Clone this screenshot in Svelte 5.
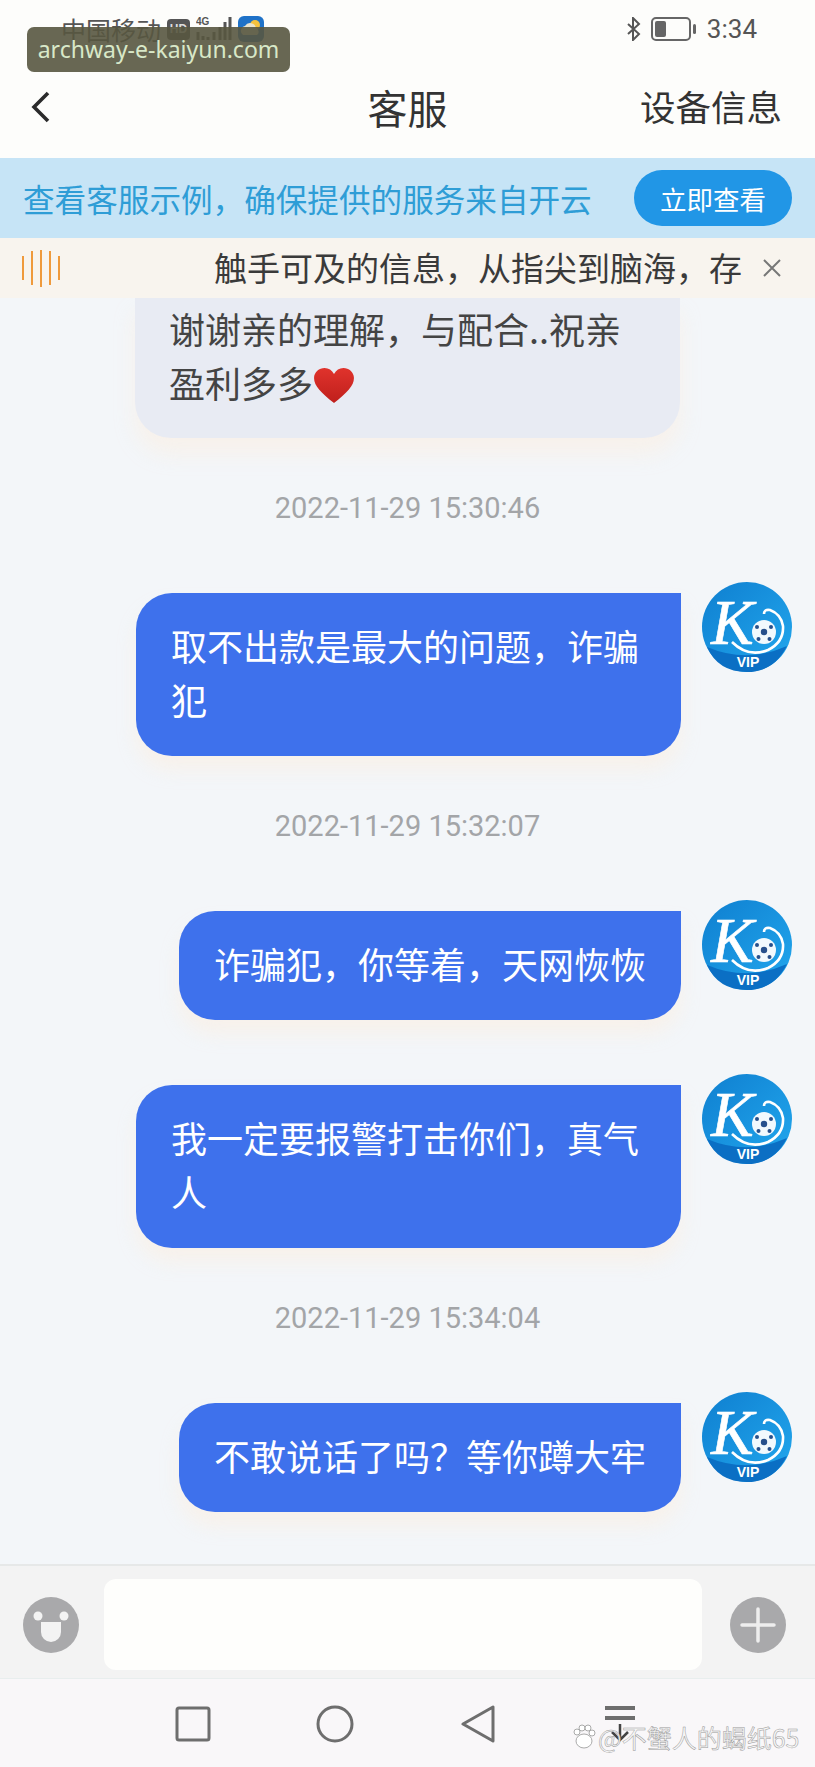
<script>
  const feed = [
    { type: 'time', text: '2022-11-29 15:30:46' },
    { type: 'msg', text: '取不出款是最大的问题，诈骗犯' },
    { type: 'time', text: '2022-11-29 15:32:07' },
    { type: 'msg', text: '诈骗犯，你等着，天网恢恢' },
    { type: 'msg', text: '我一定要报警打击你们，真气人' },
    { type: 'time', text: '2022-11-29 15:34:04' },
    { type: 'msg', text: '不敢说话了吗？等你蹲大牢' }
  ];
  const bars = [24, 34, 37, 34, 24];
</script>

{#snippet avatar()}
  <svg class="avatar" viewBox="0 0 90 90">
    <defs>
      <linearGradient id="ko" x1="0" y1="0" x2="1" y2="1">
        <stop offset="0" stop-color="#0f7fd0" />
        <stop offset="1" stop-color="#22a8ee" />
      </linearGradient>
    </defs>
    <circle cx="45" cy="45" r="45" fill="url(#ko)" />
    <path d="M5 65 Q45 82 85 64 Q72 90 45 90 Q16 90 5 65Z" fill="#0b6fc4" />
    <text x="9" y="62" class="logo-k">K</text>
    <path d="M30 60 Q46 76 66 68 Q82 60 81 44 Q79 32 68 28 Q62 27 62 32" fill="none" stroke="#fff" stroke-width="2.6" />
    <circle cx="62" cy="50" r="12" fill="#f2f9fd" />
    <circle cx="62" cy="50" r="3.2" fill="#27508c" />
    <circle cx="55" cy="45" r="2" fill="#27508c" />
    <circle cx="69" cy="45" r="2" fill="#27508c" />
    <circle cx="56.500" cy="57" r="2" fill="#27508c" />
    <circle cx="67.500" cy="57" r="2" fill="#27508c" />
    <text x="46" y="85" text-anchor="middle" class="logo-vip">VIP</text>
  </svg>
{/snippet}

<div class="app">
  <div class="stamp">archway-e-kaiyun.com</div>

  <div class="status">
    <div class="status-left">
      <span class="carrier">中国移动</span>
      <span class="hd">HD</span>
      <svg class="signal" width="36" height="26" viewBox="0 0 36 26">
        <text x="0" y="9" class="tiny">4G</text>
        <path d="M2 16v8M7 20v4M12 21v3M18 16v8M24 11v13M29 6v18M34 1v23" stroke="#555" stroke-width="3" />
      </svg>
      <svg width="26" height="26" viewBox="0 0 26 26">
        <rect width="26" height="26" rx="6" fill="#1f72c8" />
        <circle cx="17" cy="9" r="5" fill="#f5c23e" />
        <path d="M5 19a5 5 0 0 1 2-9 6 6 0 0 1 11 2 4 4 0 0 1 1 7Z" fill="#e9e3cf" />
      </svg>
    </div>
    <div class="status-right">
      <svg width="15" height="24" viewBox="0 0 15 24" fill="none" stroke="#555" stroke-width="2">
        <path d="M2 7l11 10-6 6V1l6 6L2 17" />
      </svg>
      <svg width="46" height="24" viewBox="0 0 46 24">
        <rect x="1" y="1" width="38" height="22" rx="4" fill="none" stroke="#666" stroke-width="2" />
        <rect x="4" y="4" width="11" height="16" rx="2" fill="#666" />
        <rect x="42" y="7" width="3" height="10" rx="1.5" fill="#666" />
      </svg>
      <span class="clock">3:34</span>
    </div>
  </div>

  <header class="top">
    <svg class="back" width="20" height="32" viewBox="0 0 20 32" fill="none" stroke="#2b2b2b" stroke-width="3.6">
      <path d="M17 2L3 16l14 14" />
    </svg>
    <h1>客服</h1>
    <span class="device">设备信息</span>
  </header>

  <div class="banner">
    <span>查看客服示例，确保提供的服务来自开云</span>
    <button>立即查看</button>
  </div>

  <div class="notice">
    <div class="wave">
      {#each bars as h}
        <i style="height: {h}px"></i>
      {/each}
    </div>
    <div class="notice-text">触手可及的信息，从指尖到脑海，存</div>
    <svg width="20" height="20" viewBox="0 0 20 20" stroke="#777" stroke-width="2">
      <path d="M2 2l16 16M18 2L2 18" />
    </svg>
  </div>

  <main class="chat">
    <div class="incoming">
      谢谢亲的理解，与配合..祝亲<br />盈利多多<svg class="heart" width="42" height="40" viewBox="0 0 40 40" preserveAspectRatio="none">
        <defs>
          <linearGradient id="heart" x1="0" y1="0" x2="0" y2="1">
            <stop offset="0" stop-color="#e0332c" />
            <stop offset="1" stop-color="#bf1f1c" />
          </linearGradient>
        </defs>
        <path d="M20 37C8 27 1 20 1 12 1 6 6 2 11 2c4 0 7 2 9 6 2-4 5-6 9-6 5 0 10 4 10 10 0 8-7 15-19 25Z" fill="url(#heart)" />
      </svg>
    </div>
    {#each feed as item}
      {#if item.type === 'time'}
        <div class="time">{item.text}</div>
      {:else}
        <div class="row">
          <div class="bubble">{item.text}</div>
          {@render avatar()}
        </div>
      {/if}
    {/each}
  </main>

  <div class="inputbar">
    <svg width="56" height="56" viewBox="0 0 56 56">
      <circle cx="28" cy="28" r="28" fill="#a9a9ab" />
      <circle cx="15" cy="19" r="4.5" fill="#f3f3f3" />
      <circle cx="41" cy="19" r="4.5" fill="#f3f3f3" />
      <path d="M18 25h20v10a10 10 0 0 1-20 0Z" fill="#f3f3f3" />
    </svg>
    <div class="field"></div>
    <svg width="56" height="56" viewBox="0 0 56 56">
      <circle cx="28" cy="28" r="28" fill="#a9a9ab" />
      <path d="M28 12v32M12 28h32" stroke="#eee" stroke-width="3.5" stroke-linecap="round" />
    </svg>
  </div>

  <nav class="navbar">
    <svg width="36" height="36" viewBox="0 0 36 36" fill="none" stroke="#6e6e6e" stroke-width="3">
      <rect x="2" y="2" width="32" height="32" rx="2" />
    </svg>
    <svg width="38" height="38" viewBox="0 0 38 38" fill="none" stroke="#6e6e6e" stroke-width="3">
      <circle cx="19" cy="19" r="17" />
    </svg>
    <svg width="36" height="38" viewBox="0 0 36 38" fill="none" stroke="#6e6e6e" stroke-width="3" stroke-linejoin="round">
      <path d="M33 2v34L3 19Z" />
    </svg>
    <svg width="32" height="38" viewBox="0 0 32 38" fill="none" stroke="#6e6e6e" stroke-width="4">
      <path d="M1 3h30M1 13h30" />
      <path d="M16 19v16M8 27l8 8 8-8" stroke="#444" stroke-width="2.5" />
    </svg>
    <div class="mark">
      <svg width="24" height="26" viewBox="0 0 24 26" fill="#fff" stroke="#aaa" stroke-width="1">
        <ellipse cx="12" cy="17" rx="8" ry="7" />
        <circle cx="5" cy="8" r="3" />
        <circle cx="10" cy="4" r="3" />
        <circle cx="16" cy="4" r="3" />
        <circle cx="20" cy="9" r="3" />
      </svg>
      <span>@不蟹人的蝎纸65</span>
    </div>
  </nav>
</div>

<style>
  :global(body) {
    margin: 0;
  }
  .app {
    position: relative;
    width: 815px;
    height: 1767px;
    display: flex;
    flex-direction: column;
    overflow: hidden;
    font-family: "Noto Sans CJK SC", "Noto Sans", sans-serif;
    background: #fdfdfb;
    color: #333;
  }
  .stamp {
    position: absolute;
    left: 27px;
    top: 27px;
    width: 263px;
    height: 45px;
    box-sizing: border-box;
    border-radius: 7px;
    background: rgba(88, 86, 64, 0.9);
    color: #d8e8c8;
    font-family: "Noto Sans", sans-serif;
    font-size: 23px;
    line-height: 45px;
    text-align: center;
    white-space: nowrap;
  }
  .status {
    height: 56px;
    flex: none;
    display: flex;
    justify-content: space-between;
    align-items: flex-start;
    padding: 16px 58px 0 61px;
    box-sizing: border-box;
    color: #555;
  }
  .status-left, .status-right {
    display: flex;
    align-items: center;
    height: 26px;
  }
  .status-left {
    gap: 6px;
  }
  .status-right {
    gap: 10px;
  }
  .carrier {
    font-size: 25px;
    line-height: 26px;
  }
  .hd {
    width: 23px;
    height: 21px;
    border-radius: 4px;
    background: #555;
    color: #ddd;
    font-family: "Liberation Sans", sans-serif;
    font-size: 12px;
    font-weight: 700;
    line-height: 21px;
    text-align: center;
  }
  .tiny {
    font-family: "Liberation Sans", sans-serif;
    font-size: 10px;
    font-weight: 700;
    fill: #555;
  }
  .clock {
    font-family: "Roboto", sans-serif;
    font-size: 26px;
    line-height: 26px;
  }
  .top {
    height: 102px;
    flex: none;
    position: relative;
    display: flex;
    align-items: center;
    justify-content: space-between;
    padding: 0 33px 2px 31px;
    box-sizing: border-box;
  }
  .back {
    margin-top: 2px;
  }
  .top h1 {
    position: absolute;
    left: 0;
    right: 0;
    top: 21px;
    margin: 0;
    text-align: center;
    font-size: 40px;
    font-weight: 400;
    line-height: 60px;
    color: #333;
  }
  .device {
    font-size: 35.5px;
    line-height: 50px;
    color: #333;
  }
  .banner {
    height: 80px;
    flex: none;
    display: flex;
    align-items: center;
    justify-content: space-between;
    padding: 0 23px;
    background: #c6e4f6;
    color: #2e9dd6;
    font-size: 31.6px;
    white-space: nowrap;
  }
  .banner button {
    width: 158px;
    height: 56px;
    padding: 0;
    border: none;
    border-radius: 28px;
    background: #2196e6;
    color: #fff;
    font-family: inherit;
    font-size: 26.5px;
  }
  .notice {
    height: 60px;
    flex: none;
    display: flex;
    align-items: center;
    padding: 0 33px 0 22px;
    background: #f8f4ee;
  }
  .wave {
    display: flex;
    align-items: center;
    gap: 7px;
    width: 39px;
  }
  .wave i {
    width: 2px;
    background: #ef9a3c;
  }
  .notice-text {
    flex: 1;
    margin-left: 153px;
    padding-bottom: 2px;
    font-size: 33px;
    color: #3a3a3a;
    white-space: nowrap;
  }
  .chat {
    flex: 1;
    min-height: 0;
    padding: 0 23px 0 0;
    background: #f3f6f9;
    overflow: hidden;
  }
  .incoming {
    width: 545px;
    margin-left: 135px;
    box-sizing: border-box;
    padding: 3px 33px 29px 34px;
    border-radius: 0 0 36px 36px;
    background: #e8ebf3;
    box-shadow: 0 16px 20px rgba(250, 240, 230, 0.7);
    font-size: 36px;
    line-height: 54px;
    color: #444;
  }
  .heart {
    vertical-align: -8px;
  }
  .time {
    height: 40px;
    margin-top: 50px;
    margin-right: -23px;
    text-align: center;
    font-family: "Roboto", sans-serif;
    font-size: 29px;
    line-height: 40px;
    color: #a3a5a8;
  }
  .row {
    display: flex;
    justify-content: flex-end;
    align-items: flex-start;
    gap: 21px;
    margin-top: 65px;
  }
  .bubble {
    max-width: 475px;
    padding: 25px 35px 30px;
    border-radius: 36px 0 36px 36px;
    background: #3e71ec;
    box-shadow: 0 14px 18px rgba(250, 240, 230, 0.7);
    color: #fff;
    font-size: 36px;
    line-height: 54px;
  }
  .avatar {
    width: 90px;
    height: 90px;
    flex: none;
    margin-top: -11px;
  }
  .logo-k {
    font-family: "Liberation Serif", serif;
    font-style: italic;
    font-size: 64px;
    fill: #fff;
    stroke: #fff;
    stroke-width: 0.6px;
  }
  .logo-vip {
    font-family: "Liberation Sans", sans-serif;
    font-weight: 700;
    font-size: 14px;
    fill: #fff;
  }
  .inputbar {
    height: 115px;
    flex: none;
    display: flex;
    align-items: center;
    justify-content: space-between;
    padding: 5px 29px 0 23px;
    box-sizing: border-box;
    background: #f3f3f3;
    border-top: 2px solid #e6e8e8;
    border-bottom: 1px solid #e8eeee;
  }
  .field {
    width: 598px;
    height: 91px;
    margin-left: -3px;
    border-radius: 12px;
    background: #fefefc;
  }
  .navbar {
    position: relative;
    height: 88px;
    flex: none;
    box-sizing: border-box;
    display: flex;
    align-items: center;
    gap: 0;
    padding: 2px 0 0 175px;
    background: #f9f7f9;
  }
  .navbar > svg:nth-child(2) {
    margin-left: 105px;
  }
  .navbar > svg:nth-child(3) {
    margin-left: 106px;
  }
  .navbar > svg:nth-child(4) {
    margin-left: 108px;
  }
  .mark {
    position: absolute;
    left: 572px;
    top: 42px;
    display: flex;
    align-items: center;
    gap: 2px;
    font-size: 25px;
    line-height: 32px;
    color: #f6f6f6;
    -webkit-text-stroke: 0.5px #999;
    white-space: nowrap;
  }
</style>
